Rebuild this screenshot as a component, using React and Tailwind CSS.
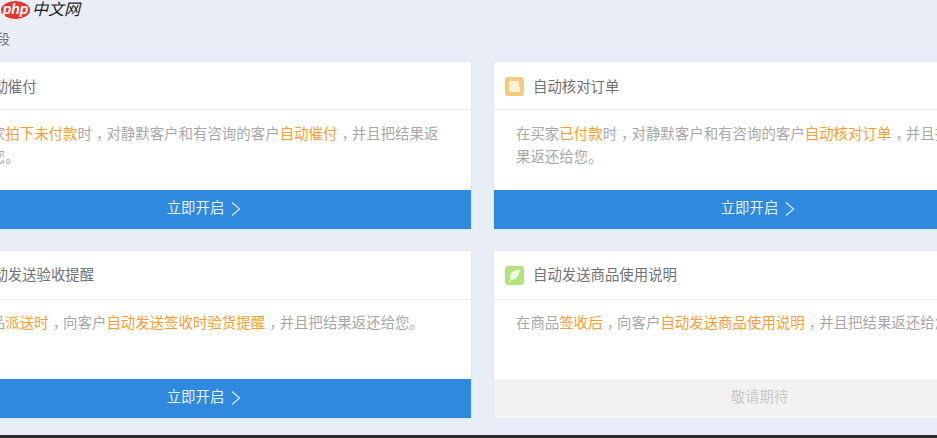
import React from "react";

const O = ({ children }) => <span className="text-[#fb9d2f]">{children}</span>;
const C = () => <span className="ml-[4px] mr-[-4px]">，</span>;

const Chevron = () => (
  <svg width="10" height="16" viewBox="0 0 10 16" fill="none" className="ml-[7px]">
    <path d="M1 1.5 L8.5 8 L1 14.5" stroke="#d5e6f8" strokeWidth="1.3" />
  </svg>
);

const DocIcon = () => (
  <div className="w-[19px] h-[19px] rounded-[3px] bg-[#f7c97c] flex items-center justify-center">
    <svg width="13" height="13" viewBox="0 0 13 13">
      <rect x="1" y="1" width="10" height="11" rx="1" fill="#fdf1da" />
      <rect x="9" y="7" width="3" height="5" fill="#fdf1da" />
    </svg>
  </div>
);

const LeafIcon = () => (
  <div className="w-[19px] h-[19px] rounded-[3px] bg-[#b5e37b] flex items-center justify-center">
    <svg width="15" height="15" viewBox="0 0 15 15">
      <path d="M13 1.5 C7 2 3 4.5 3 9 C3 10.5 3.5 11.5 4.2 12 C8.5 12 12 8.5 13 1.5 Z" fill="#f3fbe6" />
      <path d="M2 14 L8 6.5" stroke="#f3fbe6" strokeWidth="1" />
    </svg>
  </div>
);

const Card = ({ icon, title, body, disabled, headCls, bodyCls }) => (
  <div className="bg-white border border-[#e2e8f3] flex flex-col">
    <div className={`flex items-center pl-[11px] border-b border-[#e8edf6] ${headCls}`}>
      <div className="w-[19px] h-[19px] shrink-0">{icon}</div>
      <div className="ml-[9px] pt-[2px] text-[14.4px] text-[#727272]">{title}</div>
    </div>
    <div className={`px-[22px] text-[14.44px] leading-[23px] text-[#a8a8a8] ${bodyCls}`}>{body}</div>
    {disabled ? (
      <div className="h-[38px] bg-[#f2f2f2] flex items-center justify-center text-[14.4px] text-[#c9c9c9]">敬请期待</div>
    ) : (
      <div className="h-[39px] bg-[#2f89de] flex items-center justify-center pr-[3px] pb-[1px] text-[14.4px] text-[#e6f1fb]">
        立即开启
        <Chevron />
      </div>
    )}
  </div>
);

const top = { headCls: "h-[48px] pt-[2px]", bodyCls: "h-[80px] pt-[13px]" };
const bottom = { headCls: "h-[49px]", bodyCls: "h-[79px] pt-[12px]" };

export default function App() {
  return (
    <div
      className="w-[937px] h-[438px] overflow-hidden bg-[#e9eef6] flex flex-col"
      style={{ fontFamily: '"Liberation Sans", "Noto Sans CJK SC", sans-serif' }}
    >
      <div className="h-[20px] flex items-center pl-[1px] shrink-0">
        <div className="w-[29px] h-[18px] rounded-[50%] bg-[#e8322d] flex items-center justify-center text-[14px] italic font-bold leading-none text-white pb-[2px]">
          php
        </div>
        <div className="ml-[2px] text-[16px] italic leading-none text-[#1c1c1c]">中文网</div>
      </div>
      <div className="h-[41px] ml-[-18px] pt-[10px] text-[14px] leading-[18px] text-[#6e6e6e] shrink-0">手段</div>
      <div className="ml-[-61px] grid grid-cols-[533px_533px] gap-x-[21px] gap-y-[20px]">
        <Card
          {...top}
          icon={null}
          title="自动催付"
          body={
            <>
              在买家<O>拍下未付款</O>时<C />对静默客户和有咨询的客户<O>自动催付</O><C />并且把结果返还给您。
            </>
          }
        />
        <Card
          {...top}
          icon={<DocIcon />}
          title="自动核对订单"
          body={
            <>
              在买家<O>已付款</O>时<C />对静默客户和有咨询的客户<O>自动核对订单</O><C />并且把结
              <br />
              果返还给您。
            </>
          }
        />
        <Card
          {...bottom}
          icon={null}
          title="自动发送验收提醒"
          body={
            <>
              在商品<O>派送时</O><C />向客户<O>自动发送签收时验货提醒</O><C />并且把结果返还给您。
            </>
          }
        />
        <Card
          {...bottom}
          icon={<LeafIcon />}
          title="自动发送商品使用说明"
          disabled
          body={
            <>
              在商品<O>签收后</O><C />向客户<O>自动发送商品使用说明</O><C />并且把结果返还给您。
            </>
          }
        />
      </div>
      <div className="mt-auto h-[3px] bg-[#2b2b2b] shrink-0" />
    </div>
  );
}
